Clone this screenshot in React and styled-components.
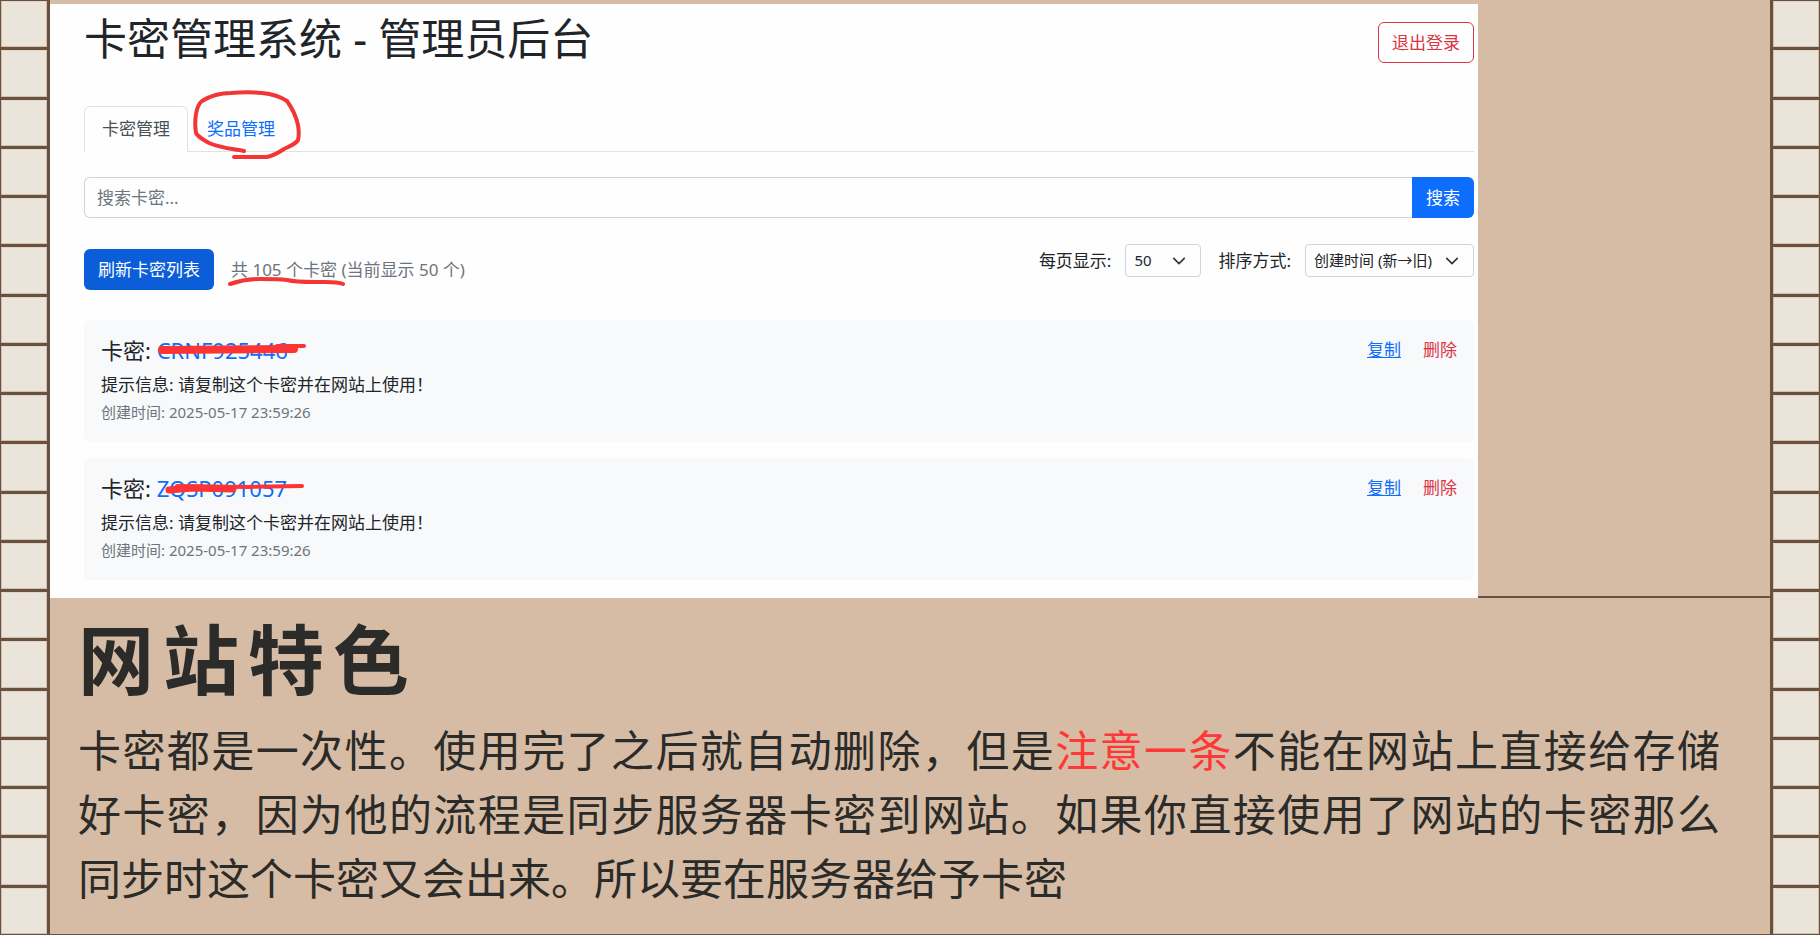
import React, { useState } from "react";
import styled, { createGlobalStyle } from "styled-components";

const cells = Array.from({ length: 19 }, (_, i) => i);

const keyList = [
    {
        code: "CRNF925446",
        message: "请复制这个卡密并在网站上使用！",
        created: "2025-05-17 23:59:26",
        stroke: (
            <>
                <path d="M5 13 L137 12" strokeWidth="8" />
                <path d="M120 9 L147 9" strokeWidth="4" />
            </>
        ),
    },
    {
        code: "ZQSP091057",
        message: "请复制这个卡密并在网站上使用！",
        created: "2025-05-17 23:59:26",
        stroke: (
            <>
                <path d="M12 15 L36 13 L76 14" strokeWidth="7" />
                <path d="M20 11 L90 12 L145 11" strokeWidth="4" />
            </>
        ),
    },
];

// 两侧的格子装饰
const Rail = ({ side }) => (
    <RailWrap $side={side} aria-hidden="true">
        {cells.map((i) => (
            <Cell key={i} />
        ))}
    </RailWrap>
);

const Select = ({ id, label, value, onChange, width, children }) => (
    <Field>
        <label htmlFor={id}>{label}</label>
        <SelectBox $width={width}>
            <select id={id} value={value} onChange={onChange}>
                {children}
            </select>
            <Chevron viewBox="0 0 16 16">
                <path d="m2 5 6 6 6-6" />
            </Chevron>
        </SelectBox>
    </Field>
);

const App = () => {
    const [keyword, setKeyword] = useState("");
    const [pageSize, setPageSize] = useState("50");
    const [sort, setSort] = useState("desc");
    return (
        <>
            <GlobalStyle />
            <Page>
                <Rail side="left" />
                <Main>
                    <Stage>
                        <Panel>
                            <Header>
                                <h1>卡密管理系统 - 管理员后台</h1>
                                <LogoutButton type="button">退出登录</LogoutButton>
                            </Header>
                            <Tabs>
                                <Tab href="#keys" $active>
                                    卡密管理
                                </Tab>
                                <Tab href="#prizes">
                                    奖品管理
                                    <CircleMark viewBox="0 0 112 72">
                                        <path d="M52 61 C42 59 28 58 17 53 C10 49 6 47 4 43 C3 37 3 30 4 24 C5 18 6 14 10 11 C18 6 28 3 39 3 C50 2 60 2 70 3 C80 4 89 7 95 11 C100 18 104 26 106 35 C107 41 107 46 106 50 C104 54 98 56 92 59 C86 63 81 66 75 67 L42 67" />
                                    </CircleMark>
                                </Tab>
                            </Tabs>
                            <SearchForm onSubmit={(e) => e.preventDefault()}>
                                <input
                                    aria-label="搜索卡密"
                                    placeholder="搜索卡密..."
                                    value={keyword}
                                    onChange={(e) => setKeyword(e.target.value)}
                                />
                                <button type="submit">搜索</button>
                            </SearchForm>
                            <Toolbar>
                                <Summary>
                                    <RefreshButton type="button">刷新卡密列表</RefreshButton>
                                    <Count>
                                        <Marked>
                                            共 105 个卡密
                                            <Underline viewBox="0 0 118 10">
                                                <path d="M3 7 C12 4 22 2 33 2 C44 2 52 2 60 3 C68 5 78 5 88 5 C100 5 109 4 116 7" />
                                            </Underline>
                                        </Marked>{" "}
                                        (当前显示 50 个)
                                    </Count>
                                </Summary>
                                <Filters>
                                    <Select
                                        id="pageSize"
                                        label="每页显示:"
                                        width={76}
                                        value={pageSize}
                                        onChange={(e) => setPageSize(e.target.value)}
                                    >
                                        <option value="50">50</option>
                                        <option value="100">100</option>
                                    </Select>
                                    <Select
                                        id="sort"
                                        label="排序方式:"
                                        width={169}
                                        value={sort}
                                        onChange={(e) => setSort(e.target.value)}
                                    >
                                        <option value="desc">创建时间 (新→旧)</option>
                                        <option value="asc">创建时间 (旧→新)</option>
                                    </Select>
                                </Filters>
                            </Toolbar>
                            <KeyList>
                                {keyList.map((item) => (
                                    <KeyCard key={item.code}>
                                        <div>
                                            <KeyTitle>
                                                卡密:{" "}
                                                <Code>
                                                    {item.code}
                                                    <Strike viewBox="0 0 150 28">{item.stroke}</Strike>
                                                </Code>
                                            </KeyTitle>
                                            <Message>提示信息: {item.message}</Message>
                                            <Created>创建时间: {item.created}</Created>
                                        </div>
                                        <Actions>
                                            <TextButton type="button" $underline>
                                                复制
                                            </TextButton>
                                            <TextButton type="button" $danger>
                                                删除
                                            </TextButton>
                                        </Actions>
                                    </KeyCard>
                                ))}
                            </KeyList>
                        </Panel>
                    </Stage>
                    <Feature>
                        <h2>网站特色</h2>
                        <p>
                            <Line $full>
                                卡密都是一次性。使用完了之后就自动删除，但是<em>注意一条</em>
                                不能在网站上直接给存储
                            </Line>
                            <Line $full>
                                好卡密，因为他的流程是同步服务器卡密到网站。如果你直接使用了网站的卡密那么
                            </Line>
                            <Line>同步时这个卡密又会出来。所以要在服务器给予卡密</Line>
                        </p>
                    </Feature>
                </Main>
                <Rail side="right" />
            </Page>
        </>
    );
};

const GlobalStyle = createGlobalStyle`
    * {
        box-sizing: border-box;
    }
    body {
        margin: 0;
        background: #d6bca4;
        color: #212529;
        font-family: "Noto Sans", "Noto Sans CJK SC", sans-serif;
        font-size: 17px;
        line-height: 25px;
    }
    h1, h2, h3, p {
        margin: 0;
    }
    button, input, select {
        font: inherit;
    }
    button {
        cursor: pointer;
    }
`;

const Page = styled.div`
    display: flex;
    min-height: 100vh;
`;

const RailWrap = styled.div`
    display: grid;
    flex: none;
    width: 50px;
    grid-template-rows: repeat(19, 1fr);
    gap: 3px;
    padding: ${({ $side }) => ($side === "left" ? "1px 3px 1px 1px" : "1px 1px 1px 3px")};
    background: #6a513d;
`;

const Cell = styled.div`
    border: 1px solid #cfc0b2;
    border-top-color: #e2d6ca;
    background: #ebe4db;
`;

const Main = styled.main`
    flex: 1;
    min-width: 0;
    display: flex;
    flex-direction: column;
    border-bottom: 1px solid #6a513d;
`;

const Stage = styled.section`
    padding-top: 4px;
    background: linear-gradient(#6a513d, #6a513d) bottom / 100% 2px no-repeat;
`;

const Panel = styled.div`
    margin-right: 292px;
    padding: 10px 4px 18px 34px;
    background: #fefefe;
`;

const Header = styled.header`
    display: flex;
    justify-content: space-between;
    align-items: flex-start;
    margin-bottom: 42px;
    h1 {
        font-size: 43px;
        font-weight: 400;
        line-height: 50px;
    }
`;

const LogoutButton = styled.button`
    height: 41px;
    margin-top: 8px;
    padding: 0 13px;
    border: 1px solid #dc3545;
    border-radius: 6px;
    background: transparent;
    color: #dc3545;
`;

const Tabs = styled.nav`
    display: flex;
    gap: 1px;
    margin-bottom: 25px;
    border-bottom: 1px solid #dee2e6;
`;

const Tab = styled.a`
    position: relative;
    height: 46px;
    margin-bottom: -1px;
    padding: 9px 17px;
    border: 1px solid ${({ $active }) => ($active ? "#dee2e6" : "transparent")};
    border-bottom-color: ${({ $active }) => ($active ? "#fefefe" : "transparent")};
    border-radius: 6px 6px 0 0;
    color: ${({ $active }) => ($active ? "#495057" : "#0d6efd")};
    text-decoration: none;
`;

// 手绘标记
const Mark = styled.svg`
    position: absolute;
    fill: none;
    stroke: #f23535;
    stroke-linecap: round;
    stroke-linejoin: round;
    pointer-events: none;
`;

const CircleMark = styled(Mark)`
    top: -17px;
    left: 2px;
    width: 112px;
    height: 72px;
    stroke-width: 4;
`;

const SearchForm = styled.form`
    display: flex;
    height: 41px;
    margin-bottom: 26px;
    input {
        flex: 1;
        min-width: 0;
        padding: 0 12px;
        border: 1px solid #ced4da;
        border-right: 0;
        border-radius: 6px 0 0 6px;
        background: #fefefe;
        color: #212529;
    }
    input::placeholder {
        color: #6c757d;
    }
    button {
        padding: 0 14px;
        border: 0;
        border-radius: 0 6px 6px 0;
        background: #0d6efd;
        color: #fff;
    }
`;

const Toolbar = styled.div`
    display: flex;
    justify-content: space-between;
    margin-bottom: 30px;
`;

const Summary = styled.div`
    display: flex;
    align-items: center;
    gap: 17px;
    padding-top: 5px;
`;

const RefreshButton = styled.button`
    height: 41px;
    padding: 0 14px;
    border: 0;
    border-radius: 6px;
    background: #0b5ed7;
    color: #fff;
`;

const Count = styled.span`
    color: #6c757d;
`;

const Marked = styled.span`
    position: relative;
`;

const Underline = styled(Mark)`
    left: -4px;
    bottom: -6px;
    width: 118px;
    height: 10px;
    stroke-width: 4;
`;

const Filters = styled.div`
    display: flex;
    align-items: flex-start;
    gap: 17px;
`;

const Field = styled.div`
    display: flex;
    align-items: center;
    gap: 14px;
`;

const SelectBox = styled.div`
    position: relative;
    width: ${({ $width }) => $width}px;
    select {
        width: 100%;
        height: 33px;
        padding: 0 30px 0 8px;
        border: 1px solid #ced4da;
        border-radius: 4px;
        background: #fefefe;
        color: #212529;
        font-size: 15px;
        appearance: none;
    }
`;

const Chevron = styled.svg`
    position: absolute;
    top: 10px;
    right: 15px;
    width: 14px;
    height: 14px;
    fill: none;
    stroke: #343a40;
    stroke-width: 2;
    stroke-linecap: round;
    stroke-linejoin: round;
    pointer-events: none;
`;

const KeyList = styled.div`
    display: flex;
    flex-direction: column;
    gap: 16px;
`;

const KeyCard = styled.article`
    display: flex;
    justify-content: space-between;
    align-items: flex-start;
    padding: 17px 17px 18px;
    border-radius: 6px;
    background: #f8f9fa;
`;

const KeyTitle = styled.h3`
    margin-bottom: 8px;
    font-size: 22px;
    font-weight: 400;
    line-height: 27px;
`;

const Code = styled.span`
    position: relative;
    color: #0d6efd;
`;

const Strike = styled(Mark)`
    left: 0;
    top: 2px;
    width: 150px;
    height: 28px;
    stroke: #fd3434;
`;

const Message = styled.p`
    margin-bottom: 4px;
`;

const Created = styled.p`
    color: #6c757d;
    font-size: 15px;
    line-height: 23px;
`;

const Actions = styled.div`
    display: flex;
    gap: 22px;
`;

const TextButton = styled.button`
    padding: 0;
    border: 0;
    background: none;
    color: ${({ $danger }) => ($danger ? "#dc3545" : "#0d6efd")};
    text-decoration: ${({ $underline }) => ($underline ? "underline" : "none")};
`;

const Feature = styled.section`
    flex: 1;
    padding: 17px 50px 18px 28px;
    color: #2b2b29;
    h2 {
        margin-bottom: 14px;
        font-size: 76px;
        font-weight: 700;
        line-height: 90px;
        letter-spacing: 9px;
    }
    p {
        font-size: 43px;
        line-height: 64px;
    }
    em {
        color: #fe3737;
        font-style: normal;
    }
`;

const Line = styled.span`
    display: block;
    text-align-last: ${({ $full }) => ($full ? "justify" : "start")};
`;

export default App;
